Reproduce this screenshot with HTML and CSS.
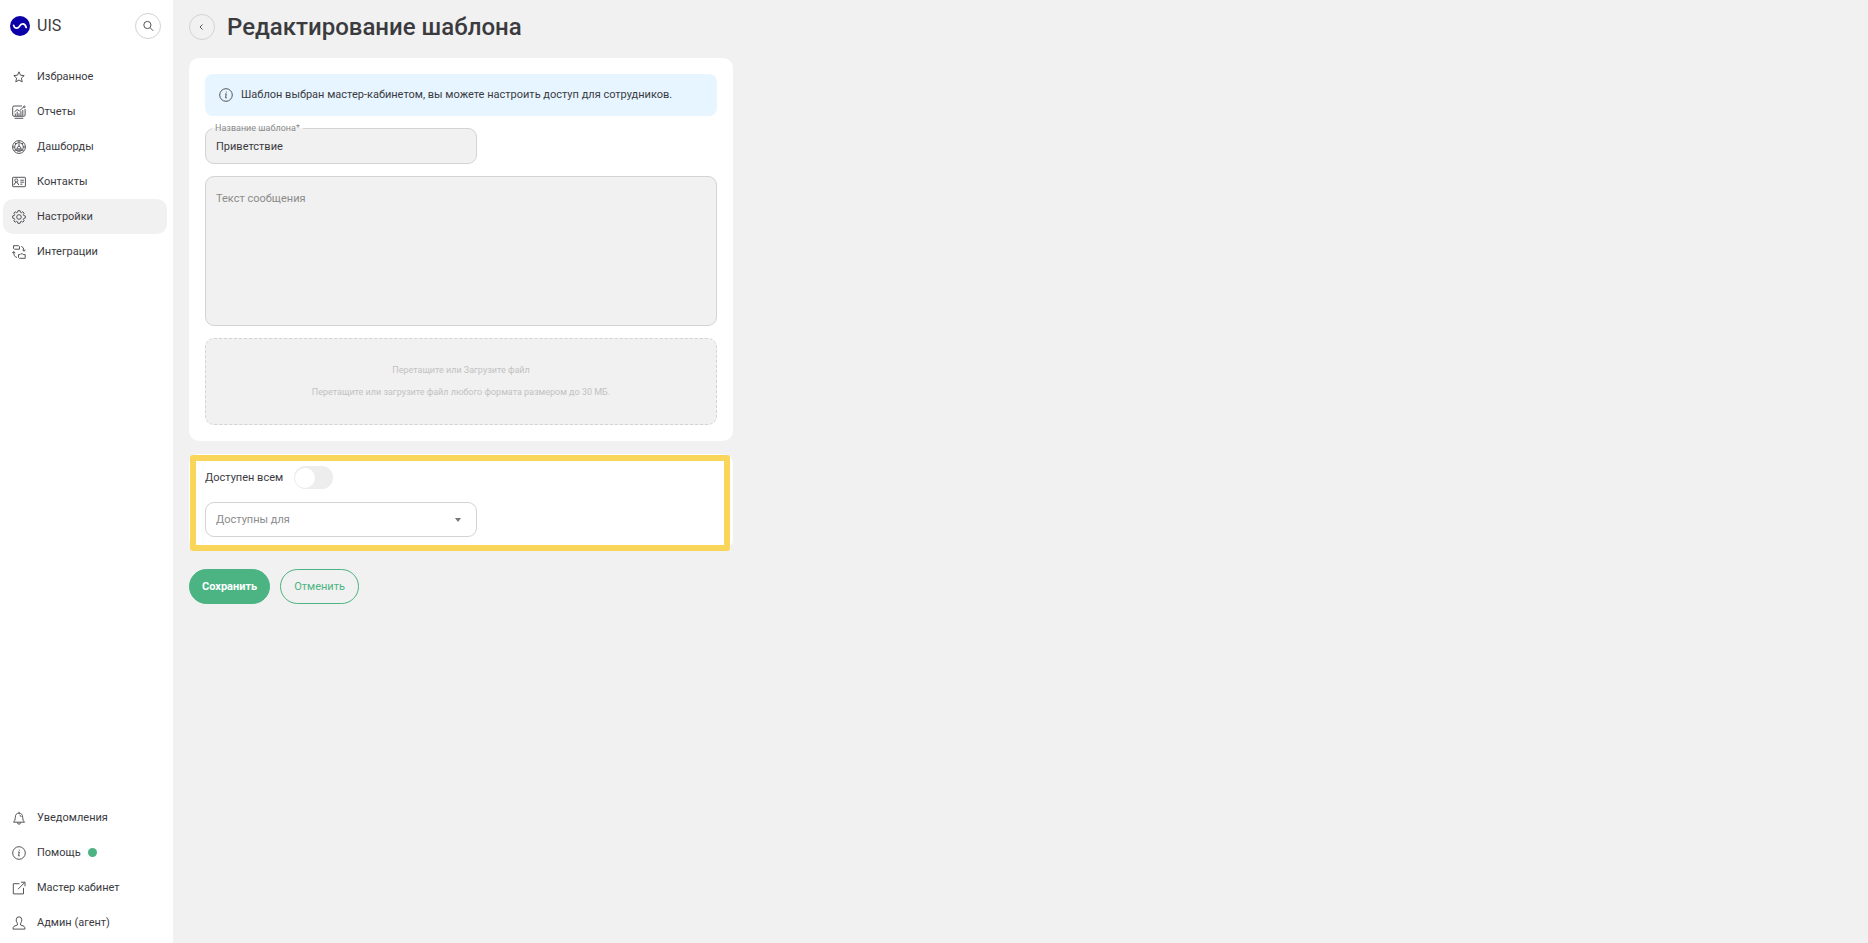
FILE: index.html
```html
<!DOCTYPE html>
<html lang="ru">
<head>
<meta charset="UTF-8">
<meta name="viewport" content="width=device-width, initial-scale=1">
<title>Редактирование шаблона - UIS</title>
<link rel="stylesheet" href="styles.css">
</head>
<body>

<aside class="sidebar">
  <div class="brand">
    <svg class="logo" viewBox="0 0 20 20">
      <circle cx="10" cy="10" r="10" fill="#0b00a8"/>
      <path d="M3.6 9.4C4.4 12.6 7.6 13 9.4 10.4C11 7.6 14.6 6.2 16.2 11.4" fill="none" stroke="#fff" stroke-width="1.8" stroke-linecap="round"/>
    </svg>
    <span class="brand-name">UIS</span>
    <button type="button" class="round-button" aria-label="Поиск">
      <svg class="small-icon" viewBox="0 0 12 12"><circle cx="5.4" cy="5" r="3.6"/><path d="M8.1 7.7L11.2 10.8"/></svg>
    </button>
  </div>

  <nav class="menu">
    <a href="#" class="menu-item">
      <svg class="icon" viewBox="0 0 14 14"><path d="M7 1.8L8.5 5.2L12.2 5.6L9.4 8.1L10.2 11.9L7 10L3.8 11.9L4.6 8.1L1.8 5.6L5.5 5.2Z"/></svg>
      Избранное
    </a>
    <a href="#" class="menu-item">
      <svg class="icon" viewBox="0 0 14 14"><path d="M10 1H2Q.7 1 .7 2.3V10Q.7 11.3 2 11.3H11.8Q13.1 11.3 13.1 10V4M2.6 13.3H11.3M3.3 11V8.5M5.2 11V6.7M7 11V8.3M8.9 11V6.2M10.8 11V5M2.4 7L5.2 4.5L7.3 6L11.9 1.8"/><circle cx="12.4" cy="1.8" r=".8"/></svg>
      Отчеты
    </a>
    <a href="#" class="menu-item">
      <svg class="icon" viewBox="0 0 14 14"><circle cx="7" cy="7" r="6.4"/><circle cx="7" cy="7" r="4.3"/><path d="M.7 7H2.7M11.3 7H13.3M7 .7V2.7M2.6 2.6L4 4M11.4 2.6L10 4M2.3 10.2H11.7M5 10V7.8M9 7.8V10M7 6V3.5"/><circle cx="7" cy="7.7" r="1.5"/></svg>
      Дашборды
    </a>
    <a href="#" class="menu-item">
      <svg class="icon" viewBox="0 0 14 14"><rect x=".6" y="2.3" width="12.8" height="9.4" rx=".6"/><circle cx="4.3" cy="5.4" r="1.5"/><path d="M1.9 10.1Q2 8.2 3.6 8V6.8M5 6.8V8Q6.6 8.2 6.7 10.1M8.3 5.2H11.9M8.3 7.2H11.9M8.3 9.2H10.4"/></svg>
      Контакты
    </a>
    <a href="#" class="menu-item active">
      <svg class="icon" viewBox="0 0 14 14"><path d="M5.9 .7H8.1L8.5 2.3L9.4 2.7L10.8 1.8L12.2 3.2L11.3 4.6L11.7 5.5L13.3 5.9V8.1L11.7 8.5L11.3 9.4L12.2 10.8L10.8 12.2L9.4 11.3L8.5 11.7L8.1 13.3H5.9L5.5 11.7L4.6 11.3L3.2 12.2L1.8 10.8L2.7 9.4L2.3 8.5L.7 8.1V5.9L2.3 5.5L2.7 4.6L1.8 3.2L3.2 1.8L4.6 2.7L5.5 2.3Z"/><circle cx="7" cy="7" r="2.3"/></svg>
      Настройки
    </a>
    <a href="#" class="menu-item">
      <svg class="icon" viewBox="0 0 14 14"><path d="M1.5 .7H6.5L7.5 1.5V4.2H2.3L1.5 3.4ZM6.5 9.6H8L8.8 8.8H10.5L11.2 9.6H13.2V13.3H7.3L6.5 12.5ZM9.3 1.3Q11.9 2 12 5.8M10.5 4.7L12 6.3L13.5 4.7M1.7 6.9Q1.6 11.8 5 12.5M.2 8.2L1.7 6.5L3.2 8.2"/></svg>
      Интеграции
    </a>
  </nav>

  <nav class="menu menu-bottom">
    <a href="#" class="menu-item">
      <svg class="icon" viewBox="0 0 14 14"><path d="M7 .8V2.2M1.5 11.2Q3.3 9.8 3.3 6.5Q3.3 2.2 7 2.2Q10.7 2.2 10.7 6.5Q10.7 9.8 12.5 11.2ZM5.4 11.4Q5.5 13.2 7 13.2Q8.5 13.2 8.6 11.4M7.5 4Q9 4.3 9.1 6"/></svg>
      Уведомления
    </a>
    <a href="#" class="menu-item">
      <svg class="icon" viewBox="0 0 14 14"><circle cx="7" cy="7" r="6.3"/><path d="M6 6H7.3L6.5 9.8H7.9M7.4 3.7V4.6"/></svg>
      Помощь <span class="dot"></span>
    </a>
    <a href="#" class="menu-item">
      <svg class="icon" viewBox="0 0 14 14"><path d="M7.5 2.7H1.3V12.9H11.5V6.9M6 8.2L12.7 1.5M8.9 1.2H13V5.3"/></svg>
      Мастер кабинет
    </a>
    <a href="#" class="menu-item">
      <svg class="icon" viewBox="0 0 14 14"><path d="M5.4 9V7.2Q4.2 5.9 4.2 3.9Q4.3 .8 7 .8Q9.7 .8 9.8 3.9Q9.8 5.9 8.6 7.2V9L12 10.3Q13 10.8 13 13.1H1Q1 10.8 2 10.3Z"/></svg>
      Админ (агент)
    </a>
  </nav>
</aside>

<main class="content">
  <div class="page-title">
    <button type="button" class="round-button" aria-label="Назад">
      <svg class="small-icon" viewBox="0 0 12 12"><path d="M6.5 3.5L4 6L6.5 8.5"/></svg>
    </button>
    <h1>Редактирование шаблона</h1>
  </div>

  <form>
    <section class="card">
      <div class="notice">
        <svg class="icon" viewBox="0 0 14 14"><circle cx="7" cy="7" r="6.3"/><path d="M6 6H7.3L6.5 9.8H7.9M7.4 3.7V4.6"/></svg>
        Шаблон выбран мастер-кабинетом, вы можете настроить доступ для сотрудников.
      </div>
      <div class="field">
        <label class="field-label" for="name">Название шаблона*</label>
        <input type="text" id="name" value="Приветствие" readonly>
      </div>
      <textarea id="message" aria-label="Текст сообщения" placeholder="Текст сообщения" readonly></textarea>
      <div class="dropzone">
        <p>Перетащите или Загрузите файл</p>
        <p>Перетащите или загрузите файл любого формата размером до 30 МБ.</p>
      </div>
    </section>

    <section class="card access">
      <div class="switch-row">
        <label for="all">Доступен всем</label>
        <input type="checkbox" id="all" class="switch">
      </div>
      <div class="field select-field">
        <select id="users" aria-label="Доступны для">
          <option>Доступны для</option>
        </select>
      </div>
      <div class="highlight"></div>
    </section>

    <div class="actions">
      <button type="submit" class="button primary">Сохранить</button>
      <button type="button" class="button">Отменить</button>
    </div>
  </form>
</main>

</body>
</html>
```
FILE: styles.css
```css
* {
  box-sizing: border-box;
}
body {
  display: flex;
  min-height: 100vh;
  margin: 0;
  background: #f1f1f1;
  color: #3b3b3f;
  font-family: Roboto, "Liberation Sans", sans-serif;
  font-size: 11px;
  line-height: 16px;
}
input, textarea, select, button {
  font: inherit;
  color: inherit;
}
svg {
  flex: none;
  fill: none;
  stroke: #55555a;
  stroke-width: 1;
}

/* sidebar */
.sidebar {
  display: flex;
  flex-direction: column;
  flex: none;
  width: 173px;
  padding: 13px 6px 3px 3px;
  background: #fff;
}
.brand {
  display: flex;
  align-items: center;
  margin-bottom: 20px;
  padding: 0 6px 0 7px;
}
.logo {
  width: 20px;
  height: 20px;
  stroke: none;
}
.brand-name {
  margin-left: 7px;
  font-size: 16px;
}
.round-button {
  display: flex;
  align-items: center;
  justify-content: center;
  flex: none;
  width: 26px;
  height: 26px;
  padding: 0;
  border: 1px solid #d3d3d3;
  border-radius: 50%;
  background: none;
  cursor: pointer;
}
.brand .round-button {
  margin-left: auto;
}
.small-icon {
  width: 12px;
  height: 12px;
}
.menu-item {
  display: flex;
  align-items: center;
  height: 35px;
  padding: 0 9px;
  border-radius: 10px;
  color: inherit;
  text-decoration: none;
}
.menu-item.active {
  background: #f1f1f1;
}
.menu-item .icon {
  margin-right: 11px;
}
.menu-bottom {
  margin-top: auto;
}
.icon {
  width: 14px;
  height: 14px;
}
.dot {
  width: 9px;
  height: 9px;
  margin-left: 7px;
  border-radius: 50%;
  background: #4bb482;
}

/* content */
.content {
  flex: 1;
  padding: 12px 16px;
}
.page-title {
  display: flex;
  align-items: center;
  gap: 12px;
  margin-bottom: 16px;
}
h1 {
  margin: 0;
  font-size: 24px;
  font-weight: 500;
  line-height: 30px;
}
.card {
  position: relative;
  max-width: 544px;
  padding: 16px;
  border-radius: 10px;
  background: #fff;
}
.notice {
  display: flex;
  align-items: center;
  gap: 8px;
  min-height: 42px;
  margin-bottom: 12px;
  padding: 0 14px;
  border-radius: 8px;
  background: #e6f5ff;
}
.field {
  position: relative;
  width: 272px;
  max-width: 100%;
}
.field-label {
  position: absolute;
  top: -6px;
  left: 7px;
  padding: 0 3px;
  background: linear-gradient(#fff 50%, #f1f1f1 50%);
  color: #8b8b8b;
  font-size: 9px;
  line-height: 12px;
}
.field input, .field select, textarea {
  display: block;
  width: 100%;
  height: 36px;
  padding: 0 10px;
  border: 1px solid #d3d3d3;
  border-radius: 9px;
  background: #f1f1f1;
}
textarea {
  height: 150px;
  margin: 12px 0;
  padding: 14px 10px;
  resize: none;
}
textarea::placeholder {
  color: #8b8b8b;
}
.dropzone {
  display: flex;
  flex-direction: column;
  align-items: center;
  justify-content: center;
  gap: 10px;
  height: 87px;
  padding-bottom: 2px;
  border: 1px dashed #d3d3d3;
  border-radius: 9px;
  background: #f1f1f1;
  color: #c2c2c2;
  font-size: 9px;
  line-height: 12px;
}
.dropzone p {
  margin: 0;
}

/* access */
.access {
  margin-top: 13px;
  padding: 12px 16px;
}
.switch-row {
  display: flex;
  align-items: center;
  gap: 11px;
  margin-bottom: 13px;
}
.switch {
  display: flex;
  align-items: center;
  appearance: none;
  width: 39px;
  height: 23px;
  margin: 0;
  padding: 1px;
  border-radius: 12px;
  background: #ededed;
}
.switch::before {
  content: "";
  width: 20px;
  height: 20px;
  border-radius: 50%;
  background: #fff;
}
.switch:checked {
  justify-content: flex-end;
  background: #4bb482;
}
.field select {
  appearance: none;
  height: 35px;
  background: #fff;
  color: #8b8b8b;
}
.select-field::after {
  content: "";
  position: absolute;
  top: 16px;
  right: 16px;
  border: 3px solid transparent;
  border-top: 4px solid #777;
  border-bottom: 0;
}
.highlight {
  position: absolute;
  inset: 1px 3px -2px 1px;
  border: 6px solid #f9d559;
  border-radius: 3px;
  pointer-events: none;
}

.actions {
  display: flex;
  gap: 10px;
  margin-top: 20px;
}
.button {
  height: 35px;
  padding: 0 13px;
  border: 1px solid #4bb482;
  border-radius: 18px;
  background: none;
  color: #4bb482;
  cursor: pointer;
}
.button.primary {
  padding: 0 12px;
  background: #4bb482;
  color: #fff;
  font-weight: 700;
}
```
